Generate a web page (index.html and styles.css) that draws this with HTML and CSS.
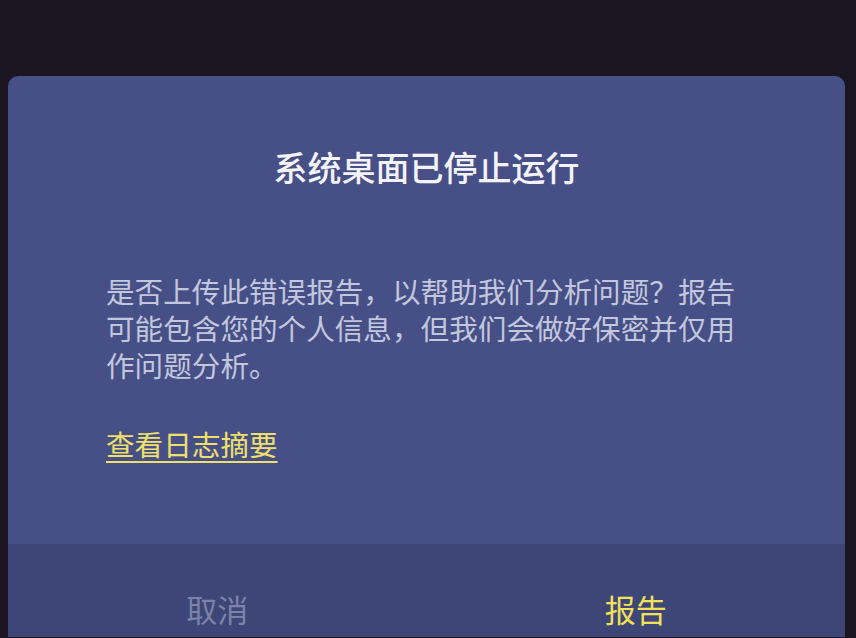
FILE: index.html
```html
<!DOCTYPE html>
<html lang="zh-CN">
<head>
<meta charset="utf-8">
<link rel="stylesheet" href="styles.css">
</head>
<body>
<div class="dialog">
  <div class="content">
    <h1 class="title">系统桌面已停止运行</h1>
    <p class="message">是否上传此错误报告，以帮助我们分析问题？报告可能包含您的个人信息，但我们会做好保密并仅用作问题分析。</p>
    <a class="link" href="#">查看日志摘要</a>
  </div>
  <div class="actions">
    <div class="btn cancel">取消</div>
    <div class="btn report">报告</div>
  </div>
</div>
</body>
</html>
```
FILE: styles.css
```css
html, body {
  margin: 0;
  padding: 0;
  height: 100%;
  overflow: hidden;
  background: #1a1521;
  font-family: "Noto Sans CJK SC", "Noto Sans", sans-serif;
}
.dialog {
  margin: 76px 11px 0 8px;
  background: #465087;
  border-radius: 10px 10px 0 0;
  overflow: hidden;
}
.content {
  padding: 71px 98px 82px 98px;
  display: flex;
  flex-direction: column;
}
.title {
  margin: 0;
  font-size: 34px;
  line-height: 40px;
  font-weight: 500;
  color: #f3f3f8;
  text-align: center;
}
.message {
  margin: 85px 0 0 0;
  font-size: 28.6px;
  line-height: 37px;
  color: #c3c7de;
  font-weight: 400;
}
.link {
  margin-top: 42px;
  align-self: flex-start;
  font-size: 28.6px;
  line-height: 37px;
  color: #efe06c;
  text-decoration: underline;
  text-underline-offset: 5px;
  text-decoration-thickness: 2px;
}
.actions {
  display: grid;
  grid-template-columns: 1fr 1fr;
  background: #3d4677;
  height: 93px;
}
.btn {
  text-align: center;
  padding-top: 46px;
  font-size: 31px;
  line-height: 38px;
}
.cancel {
  color: #7c83a9;
}
.report {
  color: #f1e15a;
}
```
